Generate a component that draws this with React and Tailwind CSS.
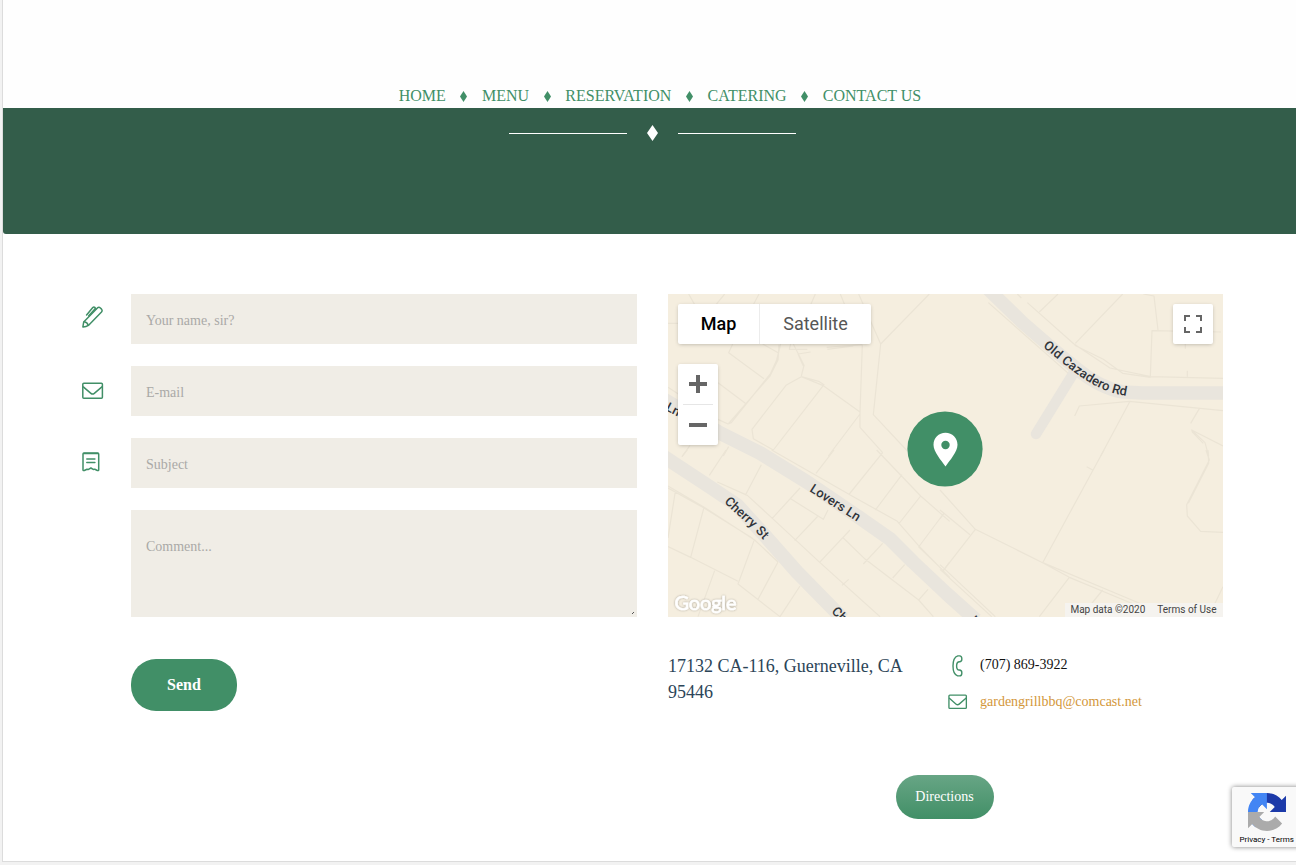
import React from "react";

const NAV = ["HOME", "MENU", "RESERVATION", "CATERING", "CONTACT US"];

const Diamond = ({ className }) => (
  <svg viewBox="0 0 10 16" preserveAspectRatio="none" className={className} fill="currentColor">
    <path d="M5 0 L10 8 L5 16 L0 8 Z" />
  </svg>
);

const Pen = () => (
  <svg width="22" height="22" viewBox="0 0 22 22" fill="none" stroke="currentColor" strokeWidth="1.500" strokeLinecap="round" strokeLinejoin="round">
    <path d="M.9 20.900 L1.700 16 L15.400 1.900 Q17 .7 18.400 2 L19.500 3.100 Q20.700 4.600 19.500 6 L6.400 19.400 Q4 21 .9 20.900 Z" />
    <path d="M2.200 15.800 Q5.400 16.200 6.200 19.200" />
    <path d="M13.800 3 L12.800 1.400 Q11.800 .6 10.800 1.600 L4.600 9" />
    <path d="M13.400 2.600 L6.800 9.800" />
  </svg>
);

const Envelope = ({ className }) => (
  <svg viewBox="0 0 22 18" className={className} fill="none" stroke="currentColor" strokeWidth="1.500" strokeLinejoin="round">
    <rect x=".8" y="1.200" width="19.600" height="15" rx="1" />
    <path d="M1 4.600 L8.900 11.400 Q10.600 12.800 12.300 11.400 L20.200 4.600" />
  </svg>
);

const Note = () => (
  <svg width="18" height="20" viewBox="0 0 18 20" fill="none" stroke="currentColor" strokeWidth="1.500" strokeLinejoin="round" strokeLinecap="round">
    <path d="M2 1 H15.600 Q16.700 1 16.700 2.100 V18 Q16.400 18.900 15.400 18.500 L12.800 17.300 Q12 17.200 11.200 17.400 L8.900 16 L6.500 17.400 L5 17.300 L2.300 18.500 Q1.300 18.900 1 18 V2.100 Q1 1 2 1 Z" />
    <path d="M1.600 1.500 H16.200 M4.800 6.900 H12.900 M4.800 10.600 H12.900" />
  </svg>
);

const Phone = () => (
  <svg width="12" height="22" viewBox="0 0 12 22" fill="none" stroke="currentColor" strokeWidth="1.400" strokeLinejoin="round">
    <path d="M5.800 .9 H7.600 Q9.800 1.200 9.800 3.400 V4.600 Q9.800 6.700 7.600 6.700 Q4.600 6.600 4.600 11 Q4.600 15.200 7.400 15 Q9.800 15.200 9.800 17.400 V18.600 Q9.600 20.800 7.600 20.900 H5.600 Q1 19.300 1 11 Q1 2.400 5.800 .9 Z" />
  </svg>
);

const Field = ({ icon, iconClass, placeholder }) => (
  <div className="flex h-[50px]">
    <div className={iconClass}>{icon}</div>
    <input
      placeholder={placeholder}
      className="h-[50px] w-[506px] bg-[#f0ede6] px-[15px] pt-[3px] text-sm text-[#555] outline-none placeholder:text-[#aaa9a6]"
    />
  </div>
);

const MapDrawing = () => (
  <svg width="555" height="323" viewBox="0 0 555 323" className="block">
    <defs>
      <path id="cazadero" d="M375 53 C398 71 424 98 460 102" />
      <path id="lovers" d="M141 197 L191 229" />
      <path id="cherry" d="M56 208 C68 221 81 229 97 248" />
      <path id="cherry2" d="M163 318 L183 338" />
      <path id="lane" d="M-3 116 L20 128" />
      <path id="lane2" d="M301 327 L321 347" />
      <filter id="soft" x="-10%" y="-20%" width="120%" height="140%">
        <feDropShadow dx="0" dy="0" stdDeviation="0.9" floodColor="#000" floodOpacity="0.35" />
      </filter>
    </defs>
    <rect width="555" height="323" fill="#f5eedf" />
    <g fill="none" stroke="#ebe4d5" strokeWidth="3.600" strokeLinejoin="round">
      <path
        transform="translate(-8 -8) scale(.33333)"
        d="M86 24 L104 56 M194 24 L168 56 M297 24 L280 56 M466 24 L452 56 M541 24 L554 56 M596 24 L662 174 L808 24 M24 112 H56 M24 304 L56 325 M218 174 L206 200 L312 278 M308 174 L357 202 M362 174 L350 222 L332 262 L214 410 L204 414 L174 400 M357 176 L354 222 L330 270 L206 412 M174 290 L256 352 M392 174 L388 190 L442 190 M400 174 L432 238 L424 270 M414 204 L452 198 M414 204 L430 240 M500 184 L607 176 M502 190 L580 180 M607 176 L600 380 V424 L668 500 M662 174 L640 386 L742 495 M600 378 L488 298 L424 272 L378 298 L276 430 L280 458 L340 492 M424 272 L476 286 L492 296 L340 492 M600 384 L505 510 M90 478 L66 512 M206 482 L190 510"
      />
      <path
        transform="translate(272 -8) scale(.33333)"
        d="M145 50 L385 262 M232 24 L244 36 M262 50 L402 174 L510 246 L632 272 L849 277 M404 178 L490 220 L548 262 L632 274 M354 24 L298 78 M548 24 L406 172 M610 24 L642 30 L654 132 M843 138 L636 134 L631 272 M736 174 V188 M742 254 V272 M404 390 L418 360 L568 346 L849 374 M570 346 L482 510 M778 368 L752 412 M849 480 L755 432 L795 470 L806 510 M755 436 L790 472"
      />
      <path
        transform="translate(-8 156) scale(.33333)"
        d="M82 0 L66 20 M198 0 L148 76 M304 44 L256 136 M172 96 L262 136 L338 206 L480 338 L660 500 M335 0 L580 140 L712 214 L775 286 L869 382 M522 0 L468 70 M668 8 L568 132 M650 0 L782 138 L869 214 M726 74 L646 180 M782 138 L716 222 M850 192 L778 288 M869 336 L850 362 L775 290 M420 114 L336 206 M392 146 L490 208 L504 180 M474 198 L404 272 M570 240 L478 338 M550 264 L616 328 L776 450 L820 500 M668 280 L610 342 M734 344 L698 384 M804 418 L776 450 M566 388 L546 406 M24 108 L130 170 L284 270 L354 336 M24 114 L132 174 L280 266 M46 124 L24 264 M132 172 L92 322 M24 290 L92 322 L234 394 M282 272 L234 402 L360 500 M354 336 L294 448 M420 408 L360 500 M164 362 L114 500"
      />
      <path
        transform="translate(272 156) scale(.33333)"
        d="M0 120 L106 238 L308 338 L604 462 M308 338 L388 382 L580 462 M0 180 L90 254 M12 190 L0 206 M106 238 L8 364 M0 344 L166 500 M0 358 L155 500 M492 0 L308 338 M440 50 L458 60 M798 0 L808 30 L740 164 L742 198 L782 244 L849 247 M804 0 L806 40 L745 160 M388 382 L298 500 M488 420 L454 462 M849 410 L824 462"
      />
    </g>
    <g fill="none" stroke="#e9e5dd" strokeWidth="14" strokeLinejoin="round">
      <path d="M-5 105 L52 139 L92 159 L139 188 L192 224 L222 245 L245 268 L279 300 L308 326" />
      <path d="M-5 162 L42 193 L69 211 L99 244 L129 278 L175 325" />
      <path strokeWidth="13.500" d="M320 -5 L355 29 L385 55 L409 75 Q432 94 455 98 L475 99 H558" />
      <path strokeWidth="10.500" strokeLinecap="round" d="M405 80 L368 140" />
    </g>
    <g fontFamily="Roboto, sans-serif" fontSize="13" fontWeight="500" fill="#30343a">
      <text><textPath href="#cazadero" textLength="98">Old Cazadero Rd</textPath></text>
      <text><textPath href="#lovers" textLength="57">Lovers Ln</textPath></text>
      <text><textPath href="#cherry" textLength="55">Cherry St</textPath></text>
      <text><textPath href="#cherry2">Ch</textPath></text>
      <text><textPath href="#lane">Ln</textPath></text>
      <text><textPath href="#lane2">Lo</textPath></text>
    </g>
    <circle cx="277" cy="155" r="37.600" fill="#418f67" />
    <path fill="#fff" fillRule="evenodd" d="M277.500 138.800 C270.600 138.800 265.500 144 265.500 150.800 C265.500 158 273 166 277.500 172.500 C282 166 289.500 158 289.500 150.800 C289.500 144 284.400 138.800 277.500 138.800 Z M277.500 146.800 A4.200 4.200 0 1 1 277.500 155.200 A4.200 4.200 0 1 1 277.500 146.800 Z" />
    <text x="6.500" y="315.500" textLength="62" fontFamily="Lato, sans-serif" fontSize="20" fill="#fff" stroke="#fff" strokeWidth=".6" filter="url(#soft)">Google</text>
  </svg>
);

const MapCard = () => (
  <div className="relative h-[323px] w-[555px] overflow-hidden font-[Roboto,sans-serif]">
    <MapDrawing />
    <div className="absolute left-[10px] top-[10px] flex h-10 rounded-xs bg-white text-lg shadow-[0_1px_4px_-1px_rgba(0,0,0,0.3)]">
      <div className="flex w-[82px] items-center justify-center border-r border-[#ececec] font-medium text-black">Map</div>
      <div className="flex w-[111px] items-center justify-center text-[#565656]">Satellite</div>
    </div>
    <div className="absolute right-[10px] top-[10px] flex size-10 items-center justify-center rounded-xs bg-white shadow-[0_1px_4px_-1px_rgba(0,0,0,0.3)]">
      <svg width="18" height="18" viewBox="0 0 18 18" fill="none" stroke="#666" strokeWidth="2">
        <path d="M1 6 V1 H6 M12 1 H17 V6 M17 12 V17 H12 M6 17 H1 V12" />
      </svg>
    </div>
    <div className="absolute left-[10px] top-[70px] flex h-[81px] w-10 flex-col items-center rounded-xs bg-white shadow-[0_1px_4px_-1px_rgba(0,0,0,0.3)]">
      <div className="flex h-10 items-center">
        <svg width="18" height="18" viewBox="0 0 18 18" fill="#666"><path d="M7 0 H11 V7 H18 V11 H11 V18 H7 V11 H0 V7 H7 Z" /></svg>
      </div>
      <div className="h-px w-[30px] bg-[#e6e6e6]" />
      <div className="flex h-10 items-center">
        <svg width="18" height="4" viewBox="0 0 18 4" fill="#666"><path d="M0 0 H18 V4 H0 Z" /></svg>
      </div>
    </div>
    <div className="absolute bottom-0 right-0 flex h-[14px] items-center gap-3 bg-[#f5f3ef] pb-px pl-[5px] pr-[6.500px] text-[10px] text-[#444]">
      <span>Map data ©2020</span>
      <span>Terms of Use</span>
    </div>
  </div>
);

export default function App() {
  return (
    <div className="relative h-[865px] w-[1296px] overflow-hidden bg-[#f2f2f2] pl-[2px] font-['Liberation_Serif',serif]">
      <div className="h-[862px] border-b border-l border-[#dcdcdc] bg-white">
        <header className="flex h-[108px] items-end justify-center bg-[#fefefe] pl-[21px]">
          <nav className="flex items-center text-base leading-6 text-[#418f67]">
            {NAV.map((label, i) => (
              <React.Fragment key={label}>
                {i > 0 && (
                  <span className="flex w-[36.200px] justify-center">
                    <Diamond className="h-[11px] w-[7px]" />
                  </span>
                )}
                <a>{label}</a>
              </React.Fragment>
            ))}
          </nav>
        </header>

        <section className="h-[126px] rounded-bl-[3px] bg-[#335d4a] pt-[17px]">
          <div className="flex items-center pl-[506px] text-white">
            <div className="h-px w-[118px] bg-white" />
            <Diamond className="mx-5 h-4 w-[11px]" />
            <div className="h-px w-[118px] bg-white" />
          </div>
        </section>

        <main className="flex pl-[79px] pt-[60px]">
          <form className="w-[555px] text-[#418f67]">
            <div className="flex flex-col gap-[22px]">
              <Field icon={<Pen />} iconClass="w-[49px] pt-[12px]" placeholder="Your name, sir?" />
              <Field icon={<Envelope className="h-[18px] w-[22px]" />} iconClass="w-[49px] pt-[16px]" placeholder="E-mail" />
              <Field icon={<Note />} iconClass="w-[49px] pt-[14px]" placeholder="Subject" />
              <div className="flex pl-[49px]">
                <textarea
                  placeholder="Comment..."
                  className="block h-[107px] w-[506px] shrink-0 resize-none bg-[#f0ede6] px-[15px] pt-[27px] text-sm text-[#555] outline-none placeholder:text-[#aaa9a6]"
                />
                <svg width="4" height="4" viewBox="0 0 4 4" className="z-10 -ml-[6px] mb-[2px] shrink-0 self-end" fill="#555">
                  <path d="M2 1 H3 V2 H2 Z M1 2 H2 V3 H1 Z" />
                </svg>
              </div>
            </div>
            <button type="button" className="ml-[49px] mt-[42px] h-[52px] w-[106px] rounded-[25px] bg-[#418f67] text-base font-bold text-white">
              Send
            </button>
          </form>

          <section className="ml-[31px] w-[555px]">
            <MapCard />
            <div className="flex pt-9">
              <address className="w-[280px] pr-9 text-lg leading-[26px] not-italic text-[#2c4558]">
                17132 CA-116, Guerneville, CA 95446
              </address>
              <div className="flex flex-col text-sm text-[#418f67]">
                <div className="flex h-[26px] pt-[2px]">
                  <div className="w-8 pl-[4px]"><Phone /></div>
                  <span className="leading-[19px] text-[#111]">(707) 869-3922</span>
                </div>
                <div className="flex items-center pt-[12px]">
                  <div className="w-8"><Envelope className="h-4 w-5" /></div>
                  <span className="pt-px leading-[20px] text-[#d3973a]">gardengrillbbq@comcast.net</span>
                </div>
              </div>
            </div>
            <div className="mt-[63px] flex justify-center pr-[2px]">
              <button type="button" className="h-[44px] w-[98px] rounded-[22px] bg-linear-to-b from-[#67a585] to-[#418f67] text-sm text-white">
                Directions
              </button>
            </div>
          </section>
        </main>
      </div>

      <aside className="absolute left-[1232px] top-[787px] flex h-[60px] w-[256px] flex-col rounded-xs bg-[#f9f9f9] pl-[7px] pt-[6px] shadow-[0_0_5px_gray]">
        <svg width="38" height="38" viewBox="0 0 64 64" className="ml-[9px] shrink-0">
          <path fill="#1c3aa9" d="M64 31.955l-.033-1.370V4.687l-7.160 7.160C50.948 4.674 42.033.093 32.050.093c-10.400 0-19.622 4.960-25.458 12.640l11.736 11.860a15.550 15.550 0 0 1 4.754-5.334c2.050-1.600 4.952-2.906 8.968-2.906.485 0 .86.057 1.135.163 4.976.393 9.288 3.140 11.828 7.124l-8.307 8.307L64 31.953" />
          <path fill="#4285f4" d="M31.862.094l-1.370.033H4.594l7.160 7.160C4.580 13.147 0 22.060 0 32.046c0 10.400 4.960 19.622 12.640 25.458L24.500 45.768a15.550 15.550 0 0 1-5.334-4.754c-1.600-2.050-2.906-4.952-2.906-8.968 0-.485.057-.86.163-1.135.393-4.976 3.140-9.288 7.124-11.828l8.307 8.307L31.860.095" />
          <path fill="#ababab" d="M.001 32.045l.033 1.370v25.898l7.160-7.160c5.860 7.173 14.774 11.754 24.760 11.754 10.400 0 19.622-4.960 25.458-12.640l-11.736-11.860a15.550 15.550 0 0 1-4.754 5.334c-2.050 1.600-4.952 2.906-8.968 2.906-.485 0-.86-.057-1.135-.163-4.976-.393-9.288-3.140-11.828-7.124l8.307-8.307L0 32.047" />
        </svg>
        <div className="whitespace-nowrap pl-[0.500px] pt-[2px] font-[Roboto,sans-serif] text-[8px] leading-[13px] text-black">Privacy - Terms</div>
      </aside>
    </div>
  );
}
